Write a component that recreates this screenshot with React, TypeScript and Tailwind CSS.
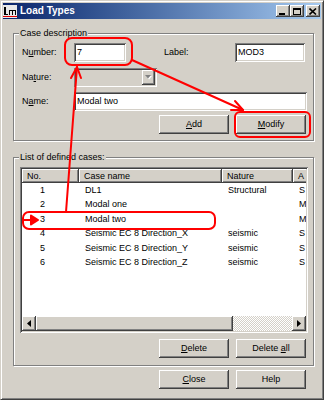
import React from 'react';

const raised =
  'shadow-[inset_-1px_-1px_0_#404040,inset_1px_1px_0_#fff,inset_-2px_-2px_0_#808080]';
const sunken =
  'shadow-[inset_1px_1px_0_#808080,inset_-1px_-1px_0_#fff,inset_2px_2px_0_#404040,inset_-2px_-2px_0_#d4d0c8]';

type Row = { no: number; name: string; nature: string; a: string };

const rows: Row[] = [
  { no: 1, name: 'DL1', nature: 'Structural', a: 'S' },
  { no: 2, name: 'Modal one', nature: '', a: 'M' },
  { no: 3, name: 'Modal two', nature: '', a: 'M' },
  { no: 4, name: 'Seismic EC 8 Direction_X', nature: 'seismic', a: 'S' },
  { no: 5, name: 'Seismic EC 8 Direction_Y', nature: 'seismic', a: 'S' },
  { no: 6, name: 'Seismic EC 8 Direction_Z', nature: 'seismic', a: 'S' },
];

const Btn: React.FC<{ children: React.ReactNode }> = ({ children }) => (
  <div className={`flex h-[19px] w-[70px] items-center justify-center bg-[#d4d0c8] ${raised}`}>
    <span>{children}</span>
  </div>
);

const Edit: React.FC<{ width: string; value: string }> = ({ width, value }) => (
  <div className={`flex h-[19px] items-center bg-white pl-[3px] ${width} ${sunken}`}>{value}</div>
);

const Group: React.FC<{ title: string; className: string; children: React.ReactNode }> = ({
  title,
  className,
  children,
}) => (
  <div
    className={`relative ml-[10px] w-[301px] border border-[#808080] shadow-[inset_1px_1px_0_#fff,1px_1px_0_#fff] ${className}`}
  >
    <span className="absolute left-[5px] top-[-6px] bg-[#d4d0c8] px-[1px] leading-[11px]">{title}</span>
    {children}
  </div>
);

const HeaderCell: React.FC<{ width: string; label: string }> = ({ width, label }) => (
  <div className={`flex h-full shrink-0 items-center bg-[#d4d0c8] pl-[5px] ${width} ${raised}`}>{label}</div>
);

const ArrowBtn: React.FC<{ dir: 'left' | 'right' }> = ({ dir }) => (
  <div className={`flex h-full w-[14px] shrink-0 items-center justify-center bg-[#d4d0c8] ${raised}`}>
    <svg width="4" height="7" viewBox="0 0 4 7">
      {dir === 'left' ? <path d="M4 0 L0 3.5 L4 7 Z" fill="#000" /> : <path d="M0 0 L4 3.5 L0 7 Z" fill="#000" />}
    </svg>
  </div>
);

export default function App() {
  return (
    <div className="relative h-[400px] w-[324px] overflow-hidden border border-t-[#d4d0c8] border-l-[#d4d0c8] border-r-[#404040] border-b-[#404040] bg-[#d4d0c8] p-[2px] font-['Liberation_Sans',Arial,sans-serif] text-[9px] leading-none text-black shadow-[inset_1px_1px_0_#fff,inset_-1px_-1px_0_#808080]">
      {/* title bar */}
      <div className="flex h-[16px] items-center bg-linear-to-r from-[#0a246a] to-[#a6caf0] pr-[1px]">
        <svg width="14" height="13" viewBox="0 0 14 13" className="shrink-0">
          <rect x="0" y="0" width="14" height="13" fill="#e8e8e8" />
          <rect x="1" y="2" width="2" height="8" fill="#000" />
          <rect x="1" y="9" width="4" height="1" fill="#000" />
          <rect x="6" y="5" width="7" height="1" fill="#000" />
          <rect x="6" y="5" width="1" height="5" fill="#000" />
          <rect x="9" y="5" width="1" height="5" fill="#000" />
          <rect x="12" y="5" width="1" height="5" fill="#000" />
          <rect x="0" y="11" width="14" height="1" fill="#d00" />
        </svg>
        <span className="ml-[3px] text-[10px] font-bold text-white">Load Types</span>
        <div className="ml-auto flex items-center">
          <div className={`flex h-[12px] w-[14px] items-end justify-start bg-[#d4d0c8] pb-[2px] pl-[3px] ${raised}`}>
            <div className="h-[2px] w-[6px] bg-black" />
          </div>
          <div className={`flex h-[12px] w-[14px] items-center justify-center bg-[#d4d0c8] ${raised}`}>
            <div className="h-[7px] w-[8px] border border-t-2 border-black" />
          </div>
          <div className={`ml-[2px] flex h-[12px] w-[14px] items-center justify-center bg-[#d4d0c8] ${raised}`}>
            <svg width="8" height="7" viewBox="0 0 8 7">
              <path d="M0.5 0.5 L7 6.5 M7 0.5 L0.5 6.5" stroke="#000" strokeWidth="1.6" />
            </svg>
          </div>
        </div>
      </div>

      {/* Case description */}
      <Group title="Case description" className="mt-[14px] h-[108px]">
        <div className="flex flex-col pl-[8px]">
          <div className="mt-[9px] flex h-[19px] items-center">
            <span className="w-[52px]">
              N<span className="underline">u</span>mber:
            </span>
            <Edit width="w-[52px]" value="7" />
            <span className="ml-[38px] w-[71px]">Label:</span>
            <Edit width="w-[70px]" value="MOD3" />
          </div>
          <div className="mt-[6px] flex h-[19px] items-center">
            <span className="w-[52px]">
              Na<span className="underline">t</span>ure:
            </span>
            <div className={`flex h-[19px] w-[83px] bg-[#d4d0c8] p-[2px] ${sunken}`}>
              <div className="flex-1" />
              <div className={`flex h-full w-[13px] items-center justify-center bg-[#d4d0c8] ${raised}`}>
                <svg width="7" height="5" viewBox="0 0 7 5">
                  <path d="M1 1 L7 1 L4 4.5 Z" fill="#fff" />
                  <path d="M0 0 L6 0 L3 3.5 Z" fill="#808080" />
                </svg>
              </div>
            </div>
          </div>
          <div className="mt-[5px] flex h-[19px] items-center">
            <span className="w-[52px]">
              N<span className="underline">a</span>me:
            </span>
            <Edit width="w-[233px]" value="Modal two" />
          </div>
          <div className="mt-[4px] flex justify-end gap-[7px] pr-[7px]">
            <Btn>
              <span className="underline">A</span>dd
            </Btn>
            <Btn>
              <span className="underline">M</span>odify
            </Btn>
          </div>
        </div>
      </Group>

      {/* List of defined cases */}
      <Group title="List of defined cases:" className="mt-[16px] h-[209px]">
        <div className={`ml-[6px] mt-[9px] flex h-[166px] w-[288px] flex-col bg-white p-[2px] ${sunken}`}>
          <div className="flex h-[14px] overflow-hidden">
            <HeaderCell width="w-[57px]" label="No." />
            <HeaderCell width="w-[143px]" label="Case name" />
            <HeaderCell width="w-[71px]" label="Nature" />
            <HeaderCell width="w-[20px]" label="A" />
          </div>
          <div className="flex flex-1 flex-col overflow-hidden">
            {rows.map((r) => (
              <div key={r.no} className="flex h-[14.5px] shrink-0 items-center">
                <div className="w-[57px] shrink-0">
                  <div className="w-[23px] text-right">{r.no}</div>
                </div>
                <div className="w-[143px] shrink-0 pl-[6px]">{r.name}</div>
                <div className="w-[71px] shrink-0 pl-[6px]">{r.nature}</div>
                <div className="pl-[6px]">{r.a}</div>
              </div>
            ))}
          </div>
          <div className="flex h-[15px]">
            <ArrowBtn dir="left" />
            <div className={`h-full w-[197px] shrink-0 bg-[#d4d0c8] ${raised}`} />
            <div className="h-full flex-1 bg-[repeating-conic-gradient(#fff_0_25%,#d4d0c8_0_50%)] bg-[length:2px_2px]" />
            <ArrowBtn dir="right" />
          </div>
        </div>
        <div className="mt-[6px] flex justify-end gap-[7px] pr-[7px]">
          <Btn>
            <span className="underline">D</span>elete
          </Btn>
          <Btn>
            Delete <span className="underline">a</span>ll
          </Btn>
        </div>
      </Group>

      <div className="mt-[4px] flex justify-end gap-[7px] pr-[15px]">
        <Btn>
          <span className="underline">C</span>lose
        </Btn>
        <Btn>Help</Btn>
      </div>

      {/* red annotations */}
      <svg
        className="pointer-events-none absolute left-[-1px] top-[-1px]"
        width="324"
        height="400"
        viewBox="0 0 324 400"
        fill="none"
        stroke="#f00"
        strokeWidth="2"
        strokeLinecap="round"
        strokeLinejoin="round"
      >
        <rect x="65" y="38" width="67" height="27" rx="7" />
        <rect x="235" y="112" width="75" height="25" rx="5" />
        <rect x="23" y="212" width="192" height="17" rx="6" />
        <path d="M66 212 L77 67" />
        <path d="M71 78 L77 67 L81 78" />
        <path d="M132 60 L243 110" />
        <path d="M235 101 L243 110 L231 110" />
        <path d="M24 220 L33 220" />
        <path d="M31 215.5 L38 220 L31 224.5 Z" fill="#f00" />
      </svg>
    </div>
  );
}
